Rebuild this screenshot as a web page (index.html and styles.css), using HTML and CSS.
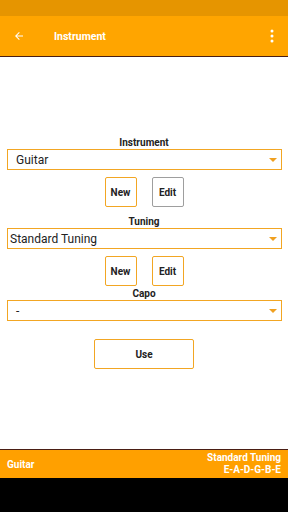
FILE: index.html
```html
<!DOCTYPE html>
<html>
<head>
<meta charset="utf-8">
<link rel="stylesheet" href="styles.css">
</head>
<body>
<div class="screen">
  <div class="status"></div>
  <div class="appbar">
    <svg class="back" width="12" height="12" viewBox="0 0 24 24"><path d="M20 11H7.83l5.59-5.59L12 4l-8 8 8 8 1.41-1.41L7.83 13H20v-2z" fill="#fff"/></svg>
    <span class="title">Instrument</span>
    <svg class="more" width="4" height="14" viewBox="0 0 4 14"><circle cx="2" cy="2" r="1.5" fill="#fff"/><circle cx="2" cy="7" r="1.5" fill="#fff"/><circle cx="2" cy="12" r="1.5" fill="#fff"/></svg>
  </div>
  <div class="content">
    <div class="label first">Instrument</div>
    <div class="spinner"><span class="val pad">Guitar</span><span class="tri"></span></div>
    <div class="btnrow">
      <div class="btn">New</div>
      <div class="btn gray">Edit</div>
    </div>
    <div class="label">Tuning</div>
    <div class="spinner"><span class="val">Standard Tuning</span><span class="tri"></span></div>
    <div class="btnrow">
      <div class="btn">New</div>
      <div class="btn">Edit</div>
    </div>
    <div class="label capo">Capo</div>
    <div class="spinner"><span class="val pad">-</span><span class="tri"></span></div>
    <div class="userow"><div class="btn use">Use</div></div>
  </div>
  <div class="footer">
    <div class="fleft">Guitar</div>
    <div class="fright"><div>Standard Tuning</div><div>E-A-D-G-B-E</div></div>
  </div>
  <div class="nav"></div>
</div>
</body>
</html>
```
FILE: styles.css
```css
html, body { margin: 0; padding: 0; }
body { font-family: Roboto, "Liberation Sans", sans-serif; background: #fff; }
.screen { width: 288px; height: 512px; display: flex; flex-direction: column; overflow: hidden; }
.status { height: 16px; background: #e69500; flex: none; }
.appbar { height: 40px; background: #ffa500; border-bottom: 1px solid #4a1e14; display: flex; align-items: center; flex: none; position: relative; }
.back { margin-left: 13px; }
.title { margin-left: 29px; color: #fff; font-weight: bold; font-size: 10.5px; }
.more { margin-left: auto; margin-right: 14px; }
.content { flex: 1; display: flex; flex-direction: column; align-items: center; }
.label { font-size: 10px; font-weight: bold; color: #222; line-height: 12px; height: 12px; margin-top: 9px; margin-bottom: 0; }
.label.first { margin-top: 80px; }
.label.capo { margin-top: 2px; }
.spinner { box-sizing: border-box; width: 275px; height: 21px; border: 1.5px solid #f2a623; display: flex; align-items: center; margin-left: 1px; }
.val { font-size: 12px; color: #222; margin-left: 2px; }
.val.pad { margin-left: 8px; }
.tri { margin-left: auto; margin-right: 4px; width: 0; height: 0; border-left: 4px solid transparent; border-right: 4px solid transparent; border-top: 4px solid #f0a020; }
.btnrow { display: flex; gap: 15px; margin-top: 7px; }
.btn { box-sizing: border-box; width: 32px; height: 30px; border: 1.5px solid #f2a623; border-radius: 2px; display: flex; align-items: center; justify-content: center; font-size: 10px; font-weight: bold; color: #222; }
.btn.gray { border-color: #9e9e9e; }
.userow { margin-top: 18px; }
.btn.use { width: 100px; height: 30px; }
.footer { flex: none; height: 28px; background: #ffa000; border-top: 1px solid #4a1e14; display: flex; align-items: center; justify-content: space-between; padding: 0 7px; color: #fff; font-weight: bold; font-size: 10px; }
.fright { text-align: right; line-height: 12px; }
.nav { flex: none; height: 34px; background: #000; }
```
